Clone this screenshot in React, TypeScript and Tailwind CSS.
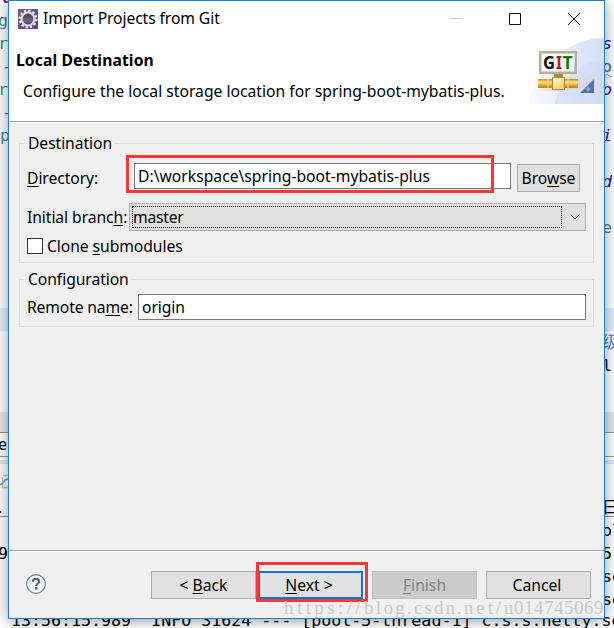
import type { ReactNode } from "react";

type EditorLine = { text: string; className?: string };

const leftCode: EditorLine[] = [
  { text: "u", className: "pl-1 font-bold text-[#8c179a]" },
  { text: "g", className: "text-[#4688a3]" },
  { text: "r", className: "text-[#3c8290]" },
  { text: "-", className: "pl-1 text-[#8146a0]" },
  { text: "r", className: "text-[#3c8290]" },
  { text: "-", className: "pl-1 text-[#8146a0]" },
  { text: "p", className: "pl-0.5 text-[#3c8290]" },
  { text: "" },
  { text: "" },
  { text: "" },
  { text: "" },
  { text: "" },
  { text: "" },
  { text: "" },
  { text: "", className: "bg-[#e4edfb]" },
  { text: "" },
  { text: "" },
];

const rightCode: EditorLine[] = [
  { text: "" },
  { text: "" },
  { text: "s", className: "italic text-[#3000d0]" },
  { text: "o", className: "text-[#4060b0] underline decoration-[#e8885a] decoration-wavy decoration-1" },
  { text: "o.", className: "italic text-[#3000d0]" },
  { text: "" },
  { text: "i.", className: "italic text-[#3000d0]" },
  { text: "" },
  { text: "d", className: "italic text-[#3000d0]" },
  { text: "" },
  { text: "e", className: "text-[#438087]" },
  { text: "" },
  { text: "" },
  { text: "" },
  { text: "", className: "bg-[#e4edfb]" },
  { text: "级", className: "text-[#6d7dbd]" },
  { text: "l" },
];

const leftLog: EditorLine[] = [{ text: "" }, { text: "9" }, { text: "" }, { text: "" }];
const rightLog: EditorLine[] = [{ text: "ol" }, { text: "5" }, { text: "se" }, { text: "se" }];

// Mnemonic letter, underlined the way Windows draws it
function Key({ children }: { children: ReactNode }) {
  return <span className="underline decoration-1 underline-offset-2">{children}</span>;
}

function Lines({ lines, indent }: { lines: EditorLine[]; indent: string }) {
  return lines.map((line, i) => (
    <div key={i} className={`h-[23px] shrink-0 whitespace-pre ${line.className ?? ""}`}>
      <span className={indent}>{line.text}</span>
    </div>
  ));
}

// The part of the IDE that shows beside the dialog
function IdeEdge({
  className,
  indent,
  code,
  log,
  tab,
  title,
  icon,
}: {
  className: string;
  indent: string;
  code: EditorLine[];
  log: EditorLine[];
  tab: string;
  title: string;
  icon?: ReactNode;
}) {
  return (
    <div className={`flex h-full shrink-0 flex-col overflow-hidden leading-[23px] ${className}`}>
      <div className="-mt-3.5 flex h-[426px] shrink-0 flex-col">
        <Lines lines={code} indent={indent} />
      </div>
      <div className="h-[21px] shrink-0 border-b border-[#999] bg-[#e6e6e6]" />
      <div className="h-6 shrink-0 border-b border-[#999] font-['Noto_Sans',sans-serif] text-[16px]">
        <span className={indent}>{tab}</span>
      </div>
      <div className="mt-[3px] h-1 shrink-0 bg-[#dfe5f5]" />
      <div className="flex h-[33px] shrink-0 items-center">{icon}</div>
      <div className="h-5 shrink-0 border-b border-[#888] font-['Noto_Sans','Noto_Sans_CJK_SC',sans-serif] text-[16px] leading-5 whitespace-nowrap">
        <span className={indent}>{title}</span>
      </div>
      <div className="pt-0.5">
        <Lines lines={log} indent={indent} />
      </div>
    </div>
  );
}

function EclipseIcon() {
  return (
    <svg width="20" height="20" viewBox="0 0 20 20">
      <defs>
        <linearGradient id="purple" x1="0" y1="0" x2="1" y2="1">
          <stop offset="0" stopColor="#6c6485" />
          <stop offset="1" stopColor="#5a3d8c" />
        </linearGradient>
        <linearGradient id="moon" x1="0" y1="0" x2="0" y2="1">
          <stop offset="0" stopColor="#3c3746" />
          <stop offset="0.6" stopColor="#6f6680" />
          <stop offset="1" stopColor="#47395e" />
        </linearGradient>
      </defs>
      <rect width="20" height="20" fill="url(#purple)" />
      <circle cx="10" cy="10" r="8.3" fill="none" stroke="#efedee" strokeWidth="2.2" strokeDasharray="2.3 2.05" />
      <circle cx="10" cy="10" r="6.5" fill="url(#moon)" stroke="#dedbdc" strokeWidth="2.2" />
    </svg>
  );
}

function GitBanner() {
  return (
    <svg width="75" height="66" viewBox="0 0 75 66" className="shrink-0">
      <defs>
        <linearGradient id="sky" x1="0" y1="0" x2="1" y2="0">
          <stop offset="0" stopColor="#f8faff" />
          <stop offset="1" stopColor="#d3dff7" />
        </linearGradient>
        <linearGradient id="pipe" x1="0" y1="0" x2="0" y2="1">
          <stop offset="0" stopColor="#c98909" />
          <stop offset="0.35" stopColor="#ffe08a" />
          <stop offset="1" stopColor="#bd7b04" />
        </linearGradient>
        <linearGradient id="box" x1="0" y1="0" x2="1" y2="1">
          <stop offset="0" stopColor="#fffbe9" />
          <stop offset="1" stopColor="#f0c55c" />
        </linearGradient>
        <linearGradient id="shade" x1="0" y1="0" x2="1" y2="0">
          <stop offset="0" stopColor="#d8dae0" stopOpacity="0" />
          <stop offset="0.5" stopColor="#d0d3da" />
          <stop offset="1" stopColor="#dadee8" />
        </linearGradient>
      </defs>
      <path d="M0 66C3 44 15 25 34 13C48 4 61 0 75 0V66Z" fill="url(#sky)" />
      <path d="M26 66C30 40 52 24 75 22V66Z" fill="#c9d8f5" opacity="0.45" />
      <path d="M0 52C32 49 55 38 75 35V43C55 50 42 56 0 52Z" fill="url(#shade)" opacity="0.8" />
      <path d="M65 41V55H51Z" fill="#5673a8" />
      <path d="M59 47l1 3 3 1-3 1-1 3-1-3-3-1 3-1z" fill="#89a2cc" />
      <rect x="11" y="14" width="36" height="21" fill="#f6faf9" stroke="#b3b198" strokeWidth="2" />
      <rect x="12.5" y="15.5" width="33" height="18" fill="none" stroke="#c7d4dc" />
      <g fontFamily="Noto Sans" fontSize="17.5" fontWeight="bold">
        <text x="14" y="31" fill="#111" textLength="12" lengthAdjust="spacingAndGlyphs">G</text>
        <text x="27" y="31" fill="#c00d25" textLength="6" lengthAdjust="spacingAndGlyphs">I</text>
        <text x="33.5" y="31" fill="#07820b">T</text>
      </g>
      <rect x="25" y="36" width="9" height="4" fill="#b28a37" />
      <rect x="9" y="41" width="40" height="9" fill="url(#pipe)" />
      <path d="M19 41v9M39 41v9" stroke="#f3d489" />
      <rect x="23.5" y="39.5" width="12" height="12" fill="url(#box)" stroke="#b98518" />
    </svg>
  );
}

function TitleBar() {
  return (
    <div className="flex h-9 items-center pl-[9px]">
      <EclipseIcon />
      <span className="ml-[5px] flex-1 tracking-[-0.1px]">Import Projects from Git</span>
      <svg width="146" height="30" viewBox="0 0 146 30" fill="none" className="mr-[7px]">
        <path d="M0 14.5h12" stroke="#ccc" />
        <path d="M58.5 9.5h11v11h-11zM117 9l12 12M129 9l-12 12" stroke="#111" />
      </svg>
    </div>
  );
}

function Group({ title, className, children }: { title: string; className: string; children: ReactNode }) {
  return (
    <fieldset className={`mx-[10px] border border-[#dcdcdc] pl-[7px] tracking-[-0.08px] ${className}`}>
      <legend className="-ml-px px-0.5 pt-px leading-[23px]">{title}</legend>
      {children}
    </fieldset>
  );
}

function DialogButton({ className, children }: { className: string; children: ReactNode }) {
  return <button className={`relative h-7 w-[105px] ${className}`}>{children}</button>;
}

function Destination() {
  return (
    <Group title="Destination" className="mt-[8px] h-[132px]">
      <div className="flex pt-2">
        <label className="w-[107px] pt-[3px] leading-6"><Key>D</Key>irectory:</label>
        <div className="relative h-[26px] w-[377px] border border-[#7a7a7a] bg-white pl-[3px] leading-6 tracking-normal">
          D:\workspace\spring-boot-mybatis-plus
          <span className="absolute -top-[9px] -left-[9px] h-[38px] w-[368px] border-3 border-[#fc3535]" />
        </div>
        <button className="mt-px ml-1.5 h-7 w-[63px] border border-[#adadad] bg-[#e1e1e1] leading-6">
          Bro<Key>w</Key>se
        </button>
      </div>
      <div className="mt-[11px] flex">
        <label className="w-[102px] pt-0.5 leading-6">Initial branc<Key>h</Key>:</label>
        <div className="flex h-7 w-[457px] items-center border border-[#adadad] bg-[#e1e1e1] pl-0.5">
          <span className="h-[22px] w-[430px] border border-dotted border-black leading-5 tracking-[-0.25px]">master</span>
          <svg width="10" height="6" viewBox="0 0 10 6" fill="none" className="ml-2">
            <path d="M0.5 0.5L5 5L9.5 0.5" stroke="#444" />
          </svg>
        </div>
      </div>
      <label className="mt-[3px] flex items-center gap-1 leading-6">
        <span className="size-4 border border-[#333] bg-white" />
        <span>Clone <Key>s</Key>ubmodules</span>
      </label>
    </Group>
  );
}

function Configuration() {
  return (
    <Group title="Configuration" className="mt-1 h-[60px]">
      <div className="flex pt-[3px]">
        <label className="w-[111px] pt-px leading-6 tracking-[-0.15px]">Remote na<Key>m</Key>e:</label>
        <div className="h-[26px] w-[448px] border border-[#7a7a7a] bg-white pl-[3px] leading-6">origin</div>
      </div>
    </Group>
  );
}

function Footer() {
  return (
    <footer className="mt-auto h-[68px] border-t border-[#a0a0a0]">
      <div className="flex h-full items-start border-t border-white pt-[19px] pr-[13px] pl-[17px]">
        <svg width="20" height="20" viewBox="0 0 20 20" fill="none" className="mt-[3px] mr-auto">
          <circle cx="10" cy="10" r="9.3" fill="#f6f7fa" stroke="#6b7b99" strokeWidth="1.2" />
          <path d="M6.8 7.7C6.8 5.8 8 4.8 10 4.8C12 4.8 13.2 5.8 13.2 7.4C13.2 9.5 10.2 9.5 10.2 12" stroke="#52638b" strokeWidth="2.2" />
          <rect x="9" y="13.2" width="2.4" height="2.4" fill="#52638b" />
        </svg>
        <DialogButton className="border border-[#adadad] bg-[#e1e1e1] pt-px leading-[25px]">
          &lt; <Key>B</Key>ack
        </DialogButton>
        <DialogButton className="mr-[9px] ml-0.5 border-2 border-[#0078d7] bg-[#e1e1e1] pt-px pr-[3px] leading-[23px]">
          <Key>N</Key>ext &gt;
          <span className="absolute -top-[11px] -left-1 h-10 w-28 border-3 border-[#fc3535]" />
        </DialogButton>
        <DialogButton className="mr-[9px] border border-[#bfbfbf] bg-[#ccc] pt-px leading-[25px] text-[#838383]">
          <Key>F</Key>inish
        </DialogButton>
        <DialogButton className="border border-[#adadad] bg-[#e1e1e1] pt-px pr-[3px] leading-[25px]">Cancel</DialogButton>
      </div>
    </footer>
  );
}

function Watermark() {
  return (
    <div className="absolute right-[10px] bottom-2 z-20 flex font-['Liberation_Serif',serif] text-[19px] leading-6 text-[#c9c9c4]">
      <span className="tracking-[3.4px]">https://</span>
      <span className="tracking-[2.3px]">blog.</span>
      <span className="tracking-[2.05px]">csdn.</span>
      <span className="tracking-[2.9px]">net/</span>
      <span className="tracking-[0.5px]">u014745069</span>
    </div>
  );
}

export default function App() {
  return (
    <div className="relative flex h-[628px] w-[614px] flex-col overflow-hidden bg-white font-['DejaVu_Sans_Mono','Noto_Sans_CJK_SC',monospace] text-[16.64px] text-black">
      <div className="flex h-[619px] shrink-0">
        <IdeEdge
          className="w-2"
          indent="-ml-0.5"
          code={leftCode}
          log={leftLog}
          tab="e"
          title="."
          icon={
            <svg width="8" height="16" viewBox="0 0 8 16" fill="none">
              <path d="M3 2.5h5M2.5 4v10.5H8" stroke="#d9c49a" strokeWidth="1.5" />
              <path d="M0 12l3-2 2-3 3-1" stroke="#58a5d0" strokeWidth="1.5" />
            </svg>
          }
        />
        <main className="relative z-10 flex h-[619px] w-[597px] shrink-0 flex-col border border-[#1883d7] bg-[#f0f0f0] font-['Noto_Sans',sans-serif] text-[15.7px] shadow-[0_2px_14px_rgba(0,0,0,0.4)]">
          <header className="h-[121px] shrink-0 border-b border-[#a0a0a0] bg-white">
            <TitleBar />
            <div className="flex justify-between pt-px">
              <div>
                <h1 className="mt-2.5 pl-[7px] leading-6 font-bold tracking-[0.1px]">Local Destination</h1>
                <p className="mt-[7px] pl-[14px] leading-6 whitespace-nowrap">
                  Configure the local storage location for spring-boot-mybatis-plus.
                </p>
              </div>
              <GitBanner />
            </div>
          </header>
          <div className="h-px shrink-0 bg-white" />
          <Destination />
          <Configuration />
          <Footer />
        </main>
        <IdeEdge className="w-[9px]" indent="-ml-[3px]" code={rightCode} log={rightLog} tab="" title="日" />
      </div>
      <div className="flex h-[9px] shrink-0 items-end pl-[11px]">
        <p className="-mb-[3px] leading-5 whitespace-pre">
          13:56:15.989  INFO 31624 --- [pool-5-thread-1] c.s.s.netty.se
        </p>
      </div>
      <Watermark />
    </div>
  );
}
